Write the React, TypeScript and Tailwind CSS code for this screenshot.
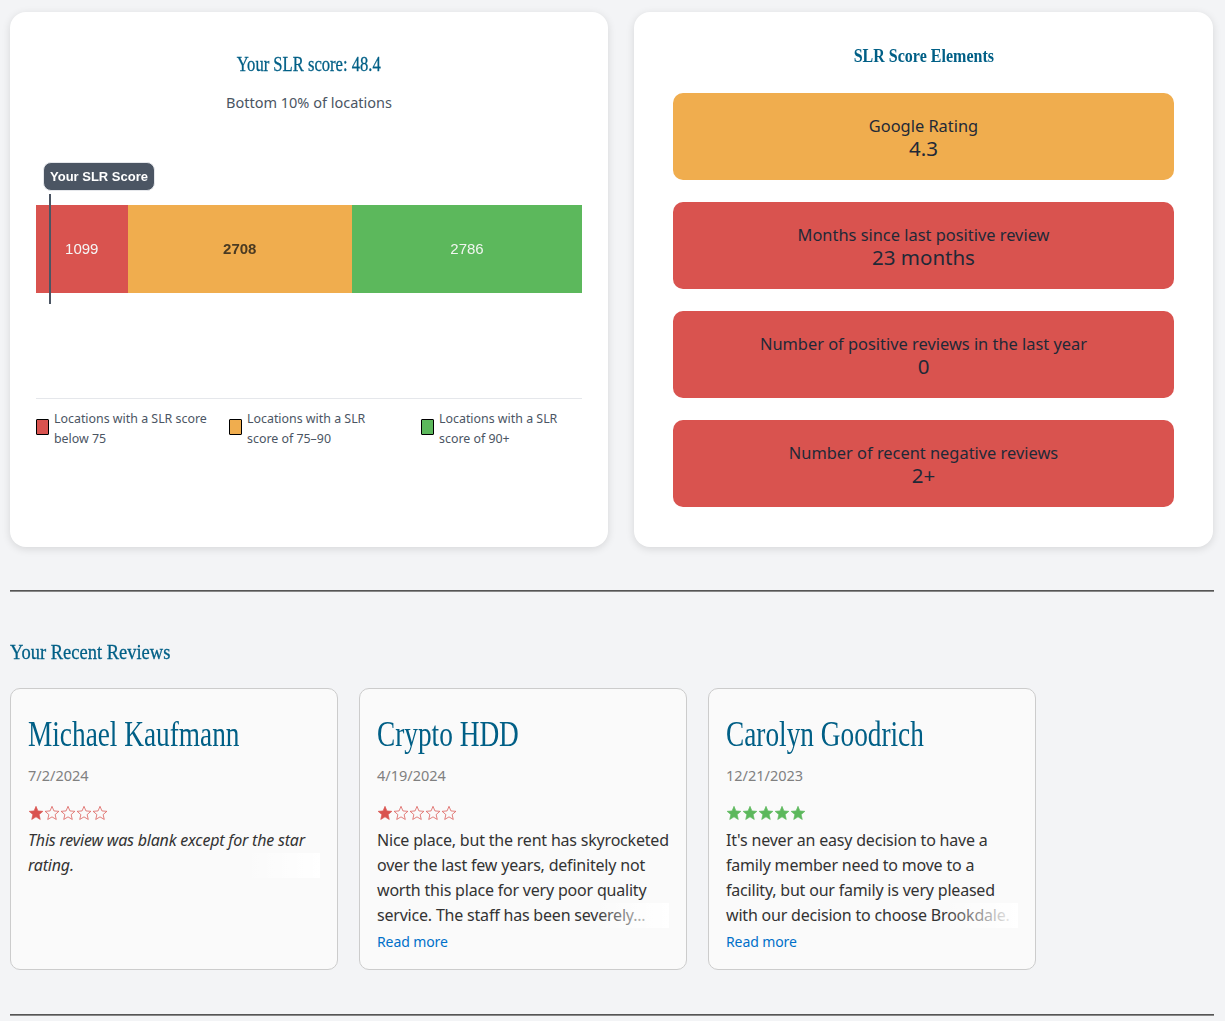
const sans = "font-['Noto_Sans','Open_Sans',sans-serif]";

const elements = [
  { label: "Google Rating", value: "4.3", color: "bg-[#f0ad4e]" },
  { label: "Months since last positive review", value: "23 months", color: "bg-[#d9534f]" },
  { label: "Number of positive reviews in the last year", value: "0", color: "bg-[#d9534f]" },
  { label: "Number of recent negative reviews", value: "2+", color: "bg-[#d9534f]" },
];

const legend = [
  { text: "Locations with a SLR score below 75", color: "bg-[#d9534f]", width: "w-[193px]", textWidth: "w-[156px]" },
  { text: "Locations with a SLR score of 75–90", color: "bg-[#f0ad4e]", width: "w-[192px]", textWidth: "w-[135px]" },
  { text: "Locations with a SLR score of 90+", color: "bg-[#5cb85c]", width: "flex-1", textWidth: "w-[135px]" },
];

const reviews = [
  {
    name: "Michael Kaufmann",
    date: "7/2/2024",
    stars: 1,
    text: "This review was blank except for the star rating.",
    blank: true,
  },
  {
    name: "Crypto HDD",
    date: "4/19/2024",
    stars: 1,
    text: "Nice place, but the rent has skyrocketed over the last few years, definitely not worth this place for very poor quality service. The staff has been severely...",
    blank: false,
  },
  {
    name: "Carolyn Goodrich",
    date: "12/21/2023",
    stars: 5,
    text: "It's never an easy decision to have a family member need to move to a facility, but our family is very pleased with our decision to choose Brookdale.",
    blank: false,
  },
];

function Stars({ count }: { count: number }) {
  const color = count >= 4 ? "#5cb85c" : "#d9534f";
  return (
    <div className="flex h-[17px]">
      {[0, 1, 2, 3, 4].map((i) => (
        <svg key={i} width="16" height="16" viewBox="0 0 24 24">
          <path
            d="M12 2l2.9 6.9 7.4.6-5.6 4.9 1.7 7.3-6.4-3.9-6.4 3.9 1.7-7.3-5.6-4.9 7.4-.6z"
            fill={i < count ? color : "none"}
            stroke={color}
            strokeWidth={i < count ? 1 : 1.3}
            strokeOpacity={i < count ? 1 : 0.85}
          />
        </svg>
      ))}
    </div>
  );
}

function ReviewCard({ review }: { review: (typeof reviews)[number] }) {
  return (
    <div className="flex h-[282px] w-[328px] flex-col rounded-[10px] border border-[#cccccc] bg-[#fafafa] px-[17px]">
      <h3 className="mt-[26px] h-[40px] origin-left scale-x-[0.78] whitespace-nowrap font-['Liberation_Serif',serif] text-[35px] leading-[40px] text-[#005f86]">
        {review.name}
      </h3>
      <div className="mt-[8px] h-[24px] text-[14.5px] leading-[24px] text-[#808080]">{review.date}</div>
      <div className="mt-[18px]">
        <Stars count={review.stars} />
      </div>
      <div className="relative mt-[6px]">
        <p
          className={`text-[16px] leading-[25px] tracking-[-0.2px] text-[#333333] ${
            review.blank ? "italic" : ""
          }`}
        >
          {review.text}
        </p>
        <div className="absolute bottom-0 right-0 h-[25px] w-[75px] bg-gradient-to-r from-transparent to-white" />
      </div>
      {!review.blank && (
        <a className="mt-[2px] text-sm leading-[24px] tracking-[-0.1px] text-[#0070c9]">Read more</a>
      )}
    </div>
  );
}

export default function App() {
  return (
    <div className={`min-h-[1021px] bg-[#f3f4f6] pl-[10px] pr-[11px] pt-[12px] ${sans}`}>
      <div className="mr-[1px] flex gap-[26px]">
        <section className="h-[535px] w-[598px] rounded-2xl bg-white px-[26px] shadow-[0_2px_8px_rgba(0,0,0,0.12)]">
          <h2 className="pt-[38px] text-center font-['Liberation_Serif',serif] text-[20px] leading-[28px] text-[#005f86] [-webkit-text-stroke:0.3px_#005f86]">
            <span className="inline-block scale-x-[0.83]">Your SLR score: 48.4</span>
          </h2>
          <p className="mt-[12px] text-center text-[14.5px] leading-[24px] text-[#4b5563]">
            Bottom 10% of locations
          </p>

          <div className="relative mt-[49px] h-[236px] border-b border-[#e5e7eb]">
            <div className="absolute -top-px left-[7px] flex h-[29px] w-[112px] items-center justify-center rounded-lg border border-[#e5e7eb] bg-[#4b5563] font-['Liberation_Sans',sans-serif] text-[13px] font-bold text-white blur-[0.3px]">
              Your SLR Score
            </div>
            <div className="absolute left-[13px] top-[31px] z-10 h-[110px] w-[2px] bg-[#4b5563]" />
            <div className="flex pt-[42px] font-['Liberation_Sans',sans-serif] text-[15px]">
              <div className="flex h-[88px] w-[91.5px] items-center justify-center bg-[#d9534f] text-[#f5f5f5]">
                <span className="blur-[0.3px]">1099</span>
              </div>
              <div className="flex h-[88px] w-[224.5px] items-center justify-center bg-[#f0ad4e] font-bold text-[#4a3a22]">
                <span className="blur-[0.3px]">2708</span>
              </div>
              <div className="flex h-[88px] flex-1 items-center justify-center bg-[#5cb85c] text-[#f0f5ef]">
                <span className="blur-[0.3px]">2786</span>
              </div>
            </div>
          </div>

          <div className="mt-[10px] flex">
            {legend.map((item) => (
              <div key={item.color} className={`flex shrink-0 ${item.width}`}>
                <span
                  className={`mt-[10px] h-[16px] w-[13px] shrink-0 rounded-[1px] border border-black ${item.color}`}
                />
                <span className={`ml-[5px] text-[12.4px] leading-[20px] text-[#4b5563] ${item.textWidth}`}>
                  {item.text}
                </span>
              </div>
            ))}
          </div>
        </section>

        <section className="h-[535px] flex-1 rounded-2xl bg-white px-[39px] shadow-[0_2px_8px_rgba(0,0,0,0.12)]">
          <h2 className="pt-[30px] text-center font-['Liberation_Serif',serif] text-[18px] font-bold leading-[28px] text-[#005f86]">
            <span className="inline-block scale-x-[0.89]">SLR Score Elements</span>
          </h2>
          <div className="mt-[23px] flex flex-col gap-[22px]">
            {elements.map((el) => (
              <div
                key={el.label}
                className={`flex h-[87px] flex-col items-center justify-center rounded-[10px] text-[#1f2937] ${el.color}`}
              >
                <div className="text-[16.4px] leading-[22px]">{el.label}</div>
                <div className="text-[20.5px] leading-[22px]">{el.value}</div>
              </div>
            ))}
          </div>
        </section>
      </div>

      <hr className="mt-[43px] h-[2px] border-0 border-t border-b border-t-[#555555] border-b-[#888888]" />

      <h2 className="mt-[46px] font-['Liberation_Serif',serif] text-[21px] leading-[28px] text-[#005f86] [-webkit-text-stroke:0.3px_#005f86]">
        <span className="inline-block origin-left scale-x-[0.88] whitespace-nowrap">Your Recent Reviews</span>
      </h2>

      <div className="mt-[22px] flex gap-[21px]">
        {reviews.map((r) => (
          <ReviewCard key={r.name} review={r} />
        ))}
      </div>

      <hr className="mt-[44px] h-[2px] border-0 border-t border-b border-t-[#555555] border-b-[#888888]" />
    </div>
  );
}
